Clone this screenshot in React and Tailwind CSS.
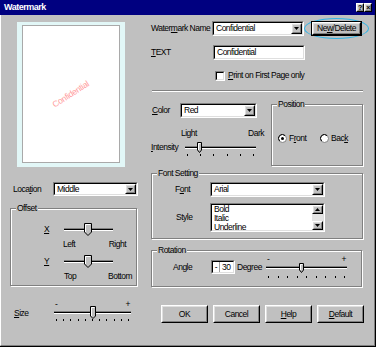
import React from 'react';

// Win95 style "Watermark" dialog

const Raised = ({ className = '', children }) => (
  <div className={`border border-t-white border-l-white border-r-black border-b-black bg-[#c0c0c0] ${className}`}>
    <div className="flex h-full w-full items-center justify-center border border-t-[#dfdfdf] border-l-[#dfdfdf] border-r-[#808080] border-b-[#808080]">
      {children}
    </div>
  </div>
);

const Sunken = ({ className = '', inner = '', children }) => (
  <div className={`border border-t-[#808080] border-l-[#808080] border-r-white border-b-white ${className}`}>
    <div className={`flex h-full w-full border border-t-black border-l-black border-r-[#dfdfdf] border-b-[#dfdfdf] bg-white ${inner}`}>
      {children}
    </div>
  </div>
);

const Tri = ({ up }) => (
  <svg width="5" height="3" viewBox="0 0 5 3">
    <polygon points={up ? '0,3 5,3 2.5,0' : '0,0 5,0 2.5,3'} fill="#000" />
  </svg>
);

const Combo = ({ value, className }) => (
  <Sunken className={className}>
    <span className="flex-1 self-center pl-[2px] leading-[9px]">{value}</span>
    <Raised className="h-full w-[11px]">
      <Tri />
    </Raised>
  </Sunken>
);

const U = ({ children }) => <u className="decoration-1 underline-offset-[1px]">{children}</u>;

const Group = ({ label, className = '', children }) => (
  <div className={`border border-[#808080] shadow-[inset_1px_1px_0_#fff,1px_1px_0_#fff] ${className}`}>
    <div className="-mt-[5px] ml-[5px] w-fit bg-[#c0c0c0] px-[1px] leading-[9px]">{label}</div>
    {children}
  </div>
);

const Thumb = ({ w, h }) => {
  const p = Math.round(w / 2);
  return (
    <svg width={w} height={h} viewBox={`0 0 ${w} ${h}`}>
      <polygon
        points={`0.5,0.5 ${w - 0.5},0.5 ${w - 0.5},${h - p} ${w / 2},${h - 0.5} 0.5,${h - p}`}
        fill="#c0c0c0"
        stroke="#000"
      />
      <polyline points={`1.5,${h - p} 1.5,1.5 ${w - 1.5},1.5`} fill="none" stroke="#fff" />
    </svg>
  );
};

const Slider = ({ className = '', value, thumbW = 6, thumbH = 11, marks, ticks = 0, tickClass = 'mt-[2px]' }) => (
  <div className={`flex flex-col ${className}`}>
    {marks && (
      <div className="flex h-[6px] justify-between px-[1px] leading-[6px]">
        <span>-</span>
        <span>+</span>
      </div>
    )}
    <div className="relative flex h-[10px] items-center">
      <div className="h-[3px] w-full border-t border-b border-t-[#808080] border-b-white bg-black" />
      <div
        className="absolute"
        style={{ left: `calc(${value}% - ${thumbW / 2}px)`, top: Math.round(5 - 0.45 * thumbH) }}
      >
        <Thumb w={thumbW} h={thumbH} />
      </div>
    </div>
    {ticks > 0 && (
      <div className={`flex justify-between px-[2px] ${tickClass}`}>
        {Array.from({ length: ticks }).map((_, i) => (
          <span key={i} className="h-[2px] w-px bg-black" />
        ))}
      </div>
    )}
  </div>
);

const Radio = ({ checked }) => (
  <svg width="9" height="9" viewBox="0 0 9 9">
    <circle cx="4.5" cy="4.5" r="4" fill="#fff" stroke="#808080" />
    <path d="M1.6 7 A3.2 3.2 0 0 1 7 1.6" fill="none" stroke="#000" />
    {checked && <circle cx="4.5" cy="4.5" r="1.5" fill="#000" />}
  </svg>
);

const Button = ({ children }) => (
  <Raised className="h-[18px] w-[47px]">
    <span className="leading-[9px]">{children}</span>
  </Raised>
);

export default function App() {
  return (
    <div className="flex h-[347px] w-[376px] flex-col border-r border-b border-black bg-[#c0c0c0] font-['Liberation_Sans',Arial,sans-serif] text-[8.5px] leading-none tracking-[-0.5px] text-black">
      {/* title bar */}
      <div className="flex h-[15px] items-center bg-[#000080] pr-[3px] pl-[4px]">
        <span className="flex-1 text-[9px] font-bold tracking-[-0.5px] text-white">Watermark</span>
        <Raised className="h-[9px] w-[8px]">
          <span className="text-[7px] font-bold leading-[7px]">?</span>
        </Raised>
        <Raised className="h-[9px] w-[8px]">
          <span className="text-[7px] font-bold leading-[7px]">×</span>
        </Raised>
      </div>

      <div className="flex flex-1 border-l border-r border-b border-l-white border-r-[#808080] border-b-[#808080]">
        {/* left column */}
        <div className="ml-[9px] flex w-[128px] flex-col">
          <div className="mt-[7px] ml-[7px] h-[145px] w-[108px] border-t-[3px] border-r-[5px] border-b-[4px] border-l-[5px] border-[#e2f7f7]">
            <div className="flex h-full items-center justify-center border border-[#a9a9a9] bg-white">
              <span className="rotate-[-33deg] text-[8.5px] tracking-[-0.3px] text-[#ff9c9c]">Confidential</span>
            </div>
          </div>

          <div className="mt-[15px] flex h-[14px] items-center">
            <span className="w-[43px] pl-[3px]">
              Loca<U>t</U>ion
            </span>
            <Combo value="Middle" className="h-[14px] w-[85px]" />
          </div>

          <Group label="Offset" className="mt-[12px] h-[78px] w-[127px]">
            <div className="mt-[10px] flex h-[12px] items-center">
              <span className="w-[53px] pl-[33px]">
                <U>X</U>
              </span>
              <Slider className="w-[49px]" value={49} thumbW={8} thumbH={13} />
            </div>
            <div className="mt-[5px] flex h-[9px] items-center justify-between pr-[10px] pl-[52px]">
              <span>Left</span>
              <span>Right</span>
            </div>
            <div className="mt-[6px] flex h-[12px] items-center">
              <span className="w-[53px] pl-[33px]">
                <U>Y</U>
              </span>
              <Slider className="w-[49px]" value={49} thumbW={8} thumbH={13} />
            </div>
            <div className="mt-[5px] flex h-[9px] items-center justify-between pr-[4px] pl-[53px]">
              <span>Top</span>
              <span>Bottom</span>
            </div>
          </Group>

          <div className="mt-[15px] flex items-start">
            <span className="mt-[8px] w-[44px] pl-[4px] leading-[9px]">
              <U>S</U>ize
            </span>
            <Slider className="w-[77px]" value={50} thumbW={6} thumbH={13} marks ticks={11} />
          </div>
        </div>

        {/* right column */}
        <div className="ml-[13px] flex w-[218px] flex-col">
          <div className="mt-[3px] flex h-[21px] items-center">
            <span className="w-[61px]">
              Water<U>m</U>ark Name
            </span>
            <Combo value="Confidential" className="h-[15px] w-[92px]" />
            <div className="flex h-[21px] w-[65px] items-center justify-center rounded-[50%] border border-[#2fb4e6]">
              <div className="border border-black">
                <Raised className="h-[13px] w-[49px]">
                  <span className="leading-[9px]">
                    Ne<U>w</U>/Delete
                  </span>
                </Raised>
              </div>
            </div>
          </div>

          <div className="mt-[6px] flex h-[15px] items-center">
            <span className="w-[62px]">
              <U>T</U>EXT
            </span>
            <Sunken className="h-[15px] w-[92px]">
              <span className="self-center pl-[2px] leading-[9px]">Confidential</span>
            </Sunken>
          </div>

          <div className="mt-[10px] flex h-[11px] items-center gap-[3px] pl-[64px]">
            <Sunken className="h-[10px] w-[10px]" />
            <span>
              <U>P</U>rint on First Page only
            </span>
          </div>

          <div className="mt-[9px] ml-[1px] h-[2px] w-[211px] border-t border-b border-t-[#808080] border-b-white" />

          <div className="mt-[10px] flex">
            <div className="flex w-[114px] flex-col">
              <div className="mt-[1px] flex h-[15px] items-center">
                <span className="w-[29px] pl-[1px]">
                  <U>C</U>olor
                </span>
                <Combo value="Red" className="h-[15px] w-[77px]" />
              </div>
              <div className="mt-[11px] flex h-[8px] items-center justify-between pr-[1px] pl-[30px]">
                <span>Light</span>
                <span>Dark</span>
              </div>
              <div className="mt-[5px] flex items-start">
                <span className="mt-[1px] w-[34px] leading-[9px]">
                  <U>I</U>ntensity
                </span>
                <Slider className="w-[71px]" value={21} thumbW={5} thumbH={11} ticks={6} />
              </div>
            </div>

            <Group label="Position" className="mt-[2px] ml-[6px] h-[62px] w-[92px]">
              <div className="mt-[24px] flex h-[10px] items-center pl-[6px]">
                <div className="flex w-[42px] items-center gap-[2px]">
                  <Radio checked />
                  <span>
                    F<U>r</U>ont
                  </span>
                </div>
                <div className="flex items-center gap-[2px]">
                  <Radio />
                  <span>
                    Bac<U>k</U>
                  </span>
                </div>
              </div>
            </Group>
          </div>

          <Group label="Font Setting" className="mt-[7px] h-[66px] w-[212px]">
            <div className="mt-[4px] flex h-[15px] items-center">
              <span className="w-[58px] pl-[23px]">
                F<U>o</U>nt
              </span>
              <Combo value="Arial" className="h-[15px] w-[115px]" />
            </div>
            <div className="mt-[6px] flex h-[29px] items-center">
              <span className="w-[58px] pl-[24px]">Style</span>
              <Sunken className="h-[29px] w-[115px]">
                <div className="flex flex-1 flex-col pl-[2px] leading-[9px]">
                  <span>Bold</span>
                  <span>Italic</span>
                  <span>Underline</span>
                </div>
                <div className="flex w-[11px] flex-col">
                  <Raised className="h-[9px] w-[11px]">
                    <Tri up />
                  </Raised>
                  <div className="flex-1 bg-[#e4e4e4]" />
                  <Raised className="h-[9px] w-[11px]">
                    <Tri />
                  </Raised>
                </div>
              </Sunken>
            </div>
          </Group>

          <Group label="Rotation" className="mt-[11px] h-[37px] w-[211px]">
            <div className="mt-[1px] flex h-[22px] items-center">
              <span className="w-[59px] pl-[21px]">Angle</span>
              <Sunken className="h-[14px] w-[24px]">
                <span className="flex w-[7px] items-center justify-center border-r border-[#a0a0a0]">-</span>
                <span className="self-center pl-[2px] leading-[9px]">30</span>
              </Sunken>
              <span className="ml-[2px] w-[29px]">Degree</span>
              <Slider
                className="w-[81px] self-start"
                value={44}
                thumbW={5}
                thumbH={10}
                marks
                ticks={9}
                tickClass="mt-[4px]"
              />
            </div>
          </Group>

          <div className="mt-[18px] flex gap-[5px] pl-[10px]">
            <Button>OK</Button>
            <Button>Cancel</Button>
            <Button>
              <U>H</U>elp
            </Button>
            <Button>
              <U>D</U>efault
            </Button>
          </div>
        </div>
      </div>
    </div>
  );
}
